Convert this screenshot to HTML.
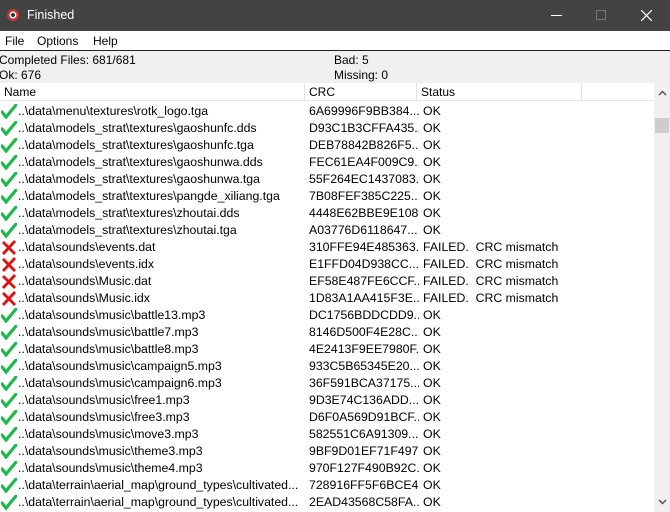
<!DOCTYPE html>
<html><head><style>
*{margin:0;padding:0;box-sizing:border-box}
body{width:670px;height:512px;overflow:hidden;background:#fff;font-family:"Liberation Sans",sans-serif;font-size:12px;color:#000;position:relative}
.tb{position:absolute;left:0;top:0;width:670px;height:31px;background:#434343;color:#fff}
.tb .t{position:absolute;left:27px;top:8px;font-size:12.5px}
.menu{position:absolute;top:31px;left:0;width:670px;height:19px;background:#fff}
.menu span{position:absolute;top:3px}
.line{position:absolute;top:50px;left:0;width:670px;height:1px;background:#222}
.stat{position:absolute;top:51px;left:0;width:670px;height:32px;background:#f0f0f0}
.stat span{position:absolute}
.hdr{position:absolute;top:83px;left:0;width:654px;height:18px;background:#fff;border-bottom:1px solid #e5e5e5}
.hdr div{position:absolute;top:0;height:18px;border-right:1px solid #e5e5e5;padding-left:4px;line-height:18px}
.row{position:absolute;left:0;width:654px;height:17px;line-height:17px;white-space:nowrap;font-size:12.3px}
.row span{position:absolute;top:0}
.row span.c{width:110px;overflow:hidden}
.sb{position:absolute;left:654px;top:83px;width:16px;height:429px;background:#f0f0f0}
.ic{position:absolute;left:1px;top:1px}
</style></head><body>
<div class="tb">
<svg style="position:absolute;left:6px;top:8px" width="14" height="14"><circle cx="7" cy="7" r="6" fill="#c33"/><circle cx="7" cy="7" r="3.5" fill="#fff"/><circle cx="7" cy="7" r="2" fill="#333"/></svg>
<span class="t">Finished</span>
<div style="position:absolute;left:551px;top:15px;width:11px;height:1px;background:#fff"></div>
<div style="position:absolute;left:596px;top:10px;width:10px;height:10px;border:1px solid #777"></div>
<svg style="position:absolute;left:641px;top:10px" width="11" height="11"><path d="M0 0L11 11M11 0L0 11" stroke="#fff" stroke-width="1.2"/></svg>
</div>
<div class="menu"><span style="left:5px">File</span><span style="left:37px">Options</span><span style="left:93px">Help</span></div>
<div class="line"></div>
<div class="stat"><span style="left:-1px;top:2px">Completed Files: 681/681</span><span style="left:-1px;top:17px">Ok: 676</span><span style="left:334px;top:2px">Bad: 5</span><span style="left:334px;top:17px">Missing: 0</span></div>
<div class="hdr"><div style="left:0;width:305px">Name</div><div style="left:305px;width:112px">CRC</div><div style="left:417px;width:165px">Status</div><div style="left:582px;width:72px;border-right:none"></div></div>
<div class="sb">
<svg style="position:absolute;left:4px;top:7px" width="9" height="6"><path d="M1 5L4.5 1.5L8 5" stroke="#555" stroke-width="1.5" fill="none"/></svg>
<div style="position:absolute;left:1px;top:35px;width:14px;height:15px;background:#cdcdcd"></div>
<svg style="position:absolute;left:4px;top:416px" width="9" height="6"><path d="M1 1L4.5 4.5L8 1" stroke="#555" stroke-width="1.5" fill="none"/></svg>
</div>
<div id="rows"></div>
<script>
var d=[["..\\data\\menu\\textures\\rotk_logo.tga","6A69996F9BB384...",0],
["..\\data\\models_strat\\textures\\gaoshunfc.dds","D93C1B3CFFA435...",0],
["..\\data\\models_strat\\textures\\gaoshunfc.tga","DEB78842B826F5...",0],
["..\\data\\models_strat\\textures\\gaoshunwa.dds","FEC61EA4F009C9...",0],
["..\\data\\models_strat\\textures\\gaoshunwa.tga","55F264EC1437083...",0],
["..\\data\\models_strat\\textures\\pangde_xiliang.tga","7B08FEF385C225...",0],
["..\\data\\models_strat\\textures\\zhoutai.dds","4448E62BBE9E108...",0],
["..\\data\\models_strat\\textures\\zhoutai.tga","A03776D6118647...",0],
["..\\data\\sounds\\events.dat","310FFE94E485363...",1],
["..\\data\\sounds\\events.idx","E1FFD04D938CC...",1],
["..\\data\\sounds\\Music.dat","EF58E487FE6CCF...",1],
["..\\data\\sounds\\Music.idx","1D83A1AA415F3E...",1],
["..\\data\\sounds\\music\\battle13.mp3","DC1756BDDCDD9...",0],
["..\\data\\sounds\\music\\battle7.mp3","8146D500F4E28C...",0],
["..\\data\\sounds\\music\\battle8.mp3","4E2413F9EE7980F...",0],
["..\\data\\sounds\\music\\campaign5.mp3","933C5B65345E20...",0],
["..\\data\\sounds\\music\\campaign6.mp3","36F591BCA37175...",0],
["..\\data\\sounds\\music\\free1.mp3","9D3E74C136ADD...",0],
["..\\data\\sounds\\music\\free3.mp3","D6F0A569D91BCF...",0],
["..\\data\\sounds\\music\\move3.mp3","582551C6A91309...",0],
["..\\data\\sounds\\music\\theme3.mp3","9BF9D01EF71F497...",0],
["..\\data\\sounds\\music\\theme4.mp3","970F127F490B92C...",0],
["..\\data\\terrain\\aerial_map\\ground_types\\cultivated...","728916FF5F6BCE4...",0],
["..\\data\\terrain\\aerial_map\\ground_types\\cultivated...","2EAD43568C58FA...",0]];
var h="";
var ok='<svg class="ic" width="16" height="15"><path d="M1 8L5 13L15 1" stroke="#1fb84a" stroke-width="3.2" fill="none" stroke-linecap="round"/></svg>';
var bad='<svg class="ic" width="16" height="15"><path d="M2 2L14 14M14 1L2 14" stroke="#e01010" stroke-width="2.8" fill="none"/></svg>';
for(var i=0;i<d.length;i++){var r=d[i];
h+='<div class="row" style="top:'+(103+i*17)+'px">'+(r[2]?bad:ok)+'<span style="left:18px">'+r[0]+'</span><span class="c" style="left:309px">'+r[1]+'</span><span style="left:423px">'+(r[2]?'FAILED.&nbsp; CRC mismatch':'OK')+'</span></div>';}
document.getElementById("rows").innerHTML=h;
</script>
</body></html>
